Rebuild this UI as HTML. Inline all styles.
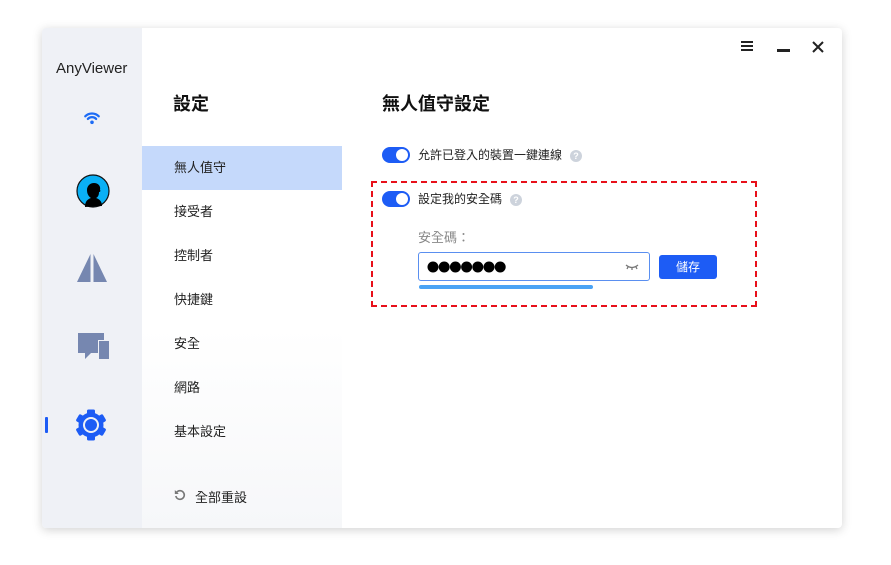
<!DOCTYPE html>
<html><head><meta charset="utf-8"><style>
*{margin:0;padding:0;box-sizing:border-box}
body{width:891px;height:565px;background:#fff;font-family:"Liberation Sans","Noto Sans CJK TC",sans-serif;position:relative;overflow:hidden}
.win{position:absolute;left:42px;top:28px;width:800px;height:500px;background:#fff;border-radius:4px;box-shadow:0 2px 10px rgba(0,0,0,.18);overflow:hidden}
.side{position:absolute;left:0;top:0;width:100px;height:500px;background:#eff1f6}
.mid{position:absolute;left:100px;top:0;width:200px;height:500px;background:linear-gradient(#fff 60%,#f6f7f9)}
.abs{position:absolute}
.nav{position:absolute;left:0;width:200px;height:44px;line-height:44px;padding-left:32px;font-size:13px;color:#222}
.tog{position:absolute;width:28px;height:16px;border-radius:8px;background:#1d5cf5}
.tog:after{content:"";position:absolute;right:2px;top:2px;width:12px;height:12px;border-radius:50%;background:#fff}
.q{position:absolute;width:12px;height:12px;border-radius:50%;background:#cdd3dc;color:#fff;font-size:9px;line-height:12px;text-align:center;font-weight:bold}
</style></head><body>
<div class="win">
<div class="side">
 <div class="abs" style="left:14px;top:32px;font-size:15px;color:#222">AnyViewer</div>
 <svg class="abs" style="left:41px;top:82px" width="18" height="16" viewBox="0 0 16 14"><path d="M2 5.5a8.5 8.5 0 0 1 12 0M4.3 7.8a5.2 5.2 0 0 1 7.4 0" stroke="#1d6cf5" stroke-width="2" fill="none" stroke-linecap="round"/><circle cx="8" cy="10.8" r="1.6" fill="#1d6cf5"/></svg>
 <svg class="abs" style="left:34px;top:146px" width="34" height="34" viewBox="0 0 34 34"><circle cx="17" cy="17" r="16" fill="#0ab0f5" stroke="#111" stroke-width="1.2"/><path d="M9 33c0-6 3-8 6-9-3-2-4-5-4-8 0-4 3-7 7-7s7 3 6 7c1 1 0 2-1 2 0 3-1 5-3 6 3 1 6 3 6 8z" fill="#000"/></svg>
 <svg class="abs" style="left:34px;top:226px" width="32" height="28" viewBox="0 0 32 28"><path d="M14.5 0L1 28h13.5z M17.5 0L31 28H17.5z" fill="#7687b0"/></svg>
 <svg class="abs" style="left:36px;top:305px" width="32" height="28" viewBox="0 0 32 28"><path d="M0 0h26v7h-6v13H13l-6 6v-6H0z" fill="#7687b0"/><rect x="21" y="8" width="10" height="18" fill="#7687b0"/></svg>
 <div class="abs" style="left:3px;top:389px;width:3px;height:16px;background:#1d5cf5;border-radius:1px"></div>
 <svg class="abs" style="left:33px;top:381px" width="32" height="32" viewBox="0 0 32 32"><g fill="#1d5cf5"><circle cx="16" cy="16" r="12.5"/><g id="t"><rect x="12" y="0.5" width="8" height="7" rx="1.5"/></g><use href="#t" transform="rotate(60 16 16)"/><use href="#t" transform="rotate(120 16 16)"/><use href="#t" transform="rotate(180 16 16)"/><use href="#t" transform="rotate(240 16 16)"/><use href="#t" transform="rotate(300 16 16)"/></g><circle cx="16" cy="16" r="8" fill="#eff1f6"/><circle cx="16" cy="16" r="6" fill="#1d5cf5"/></svg>
</div>
<div class="mid">
 <div class="abs" style="left:31px;top:62px;font-size:18px;font-weight:bold;color:#111">設定</div>
 <div class="nav" style="top:118px;background:#c5d9fb">無人值守</div>
 <div class="nav" style="top:162px">接受者</div>
 <div class="nav" style="top:206px">控制者</div>
 <div class="nav" style="top:250px">快捷鍵</div>
 <div class="nav" style="top:294px">安全</div>
 <div class="nav" style="top:338px">網路</div>
 <div class="nav" style="top:382px">基本設定</div>
 <svg class="abs" style="left:32px;top:461px" width="12" height="12" viewBox="0 0 12 12"><path d="M2.5 3.5A4.3 4.3 0 1 1 1.8 7" stroke="#777" stroke-width="1.6" fill="none"/><path d="M0.8 1v4h4z" fill="#777"/></svg>
 <div class="abs" style="left:53px;top:459px;font-size:13px;color:#222">全部重設</div>
</div>
<div class="abs" style="left:699px;top:13px;width:12px;height:10px;border-top:2.5px solid #222;border-bottom:2.5px solid #222"><div style="margin-top:1.5px;height:2.5px;background:#222"></div></div>
<div class="abs" style="left:735px;top:21px;width:13px;height:2.5px;background:#222"></div>
<svg class="abs" style="left:770px;top:13px" width="12" height="12" viewBox="0 0 12 12"><path d="M1 1L11 11M11 1L1 11" stroke="#222" stroke-width="2"/></svg>
<div class="abs" style="left:340px;top:62px;font-size:18px;font-weight:bold;color:#111">無人值守設定</div>
<div class="tog" style="left:340px;top:119px"></div>
<div class="abs" style="left:376px;top:119px;font-size:12px;color:#222;line-height:16px">允許已登入的裝置一鍵連線</div>
<div class="q" style="left:528px;top:122px">?</div>
<div class="abs" style="left:329px;top:153px;width:386px;height:126px;border:2px dashed #e8101a"></div>
<div class="tog" style="left:340px;top:163px"></div>
<div class="abs" style="left:376px;top:163px;font-size:12px;color:#222;line-height:16px">設定我的安全碼</div>
<div class="q" style="left:468px;top:166px">?</div>
<div class="abs" style="left:376px;top:199px;font-size:13px;color:#888">安全碼：</div>
<div class="abs" style="left:376px;top:224px;width:232px;height:29px;border:1px solid #5a8ff0;border-radius:3px;background:#fff"></div>
<svg class="abs" style="left:385px;top:233px" width="80" height="12" viewBox="0 0 80 12"><g fill="#000"><circle cx="6" cy="6" r="5.5"/><circle cx="17.2" cy="6" r="5.5"/><circle cx="28.4" cy="6" r="5.5"/><circle cx="39.6" cy="6" r="5.5"/><circle cx="50.8" cy="6" r="5.5"/><circle cx="62" cy="6" r="5.5"/><circle cx="73.2" cy="6" r="5.5"/></g></svg>
<svg class="abs" style="left:583px;top:235px" width="14" height="8" viewBox="0 0 14 8"><path d="M1 2q6 5 12 0M3 4l-1 2M7 5v2M11 4l1 2" stroke="#777" stroke-width="1.3" fill="none"/></svg>
<div class="abs" style="left:617px;top:227px;width:58px;height:24px;background:#1d5cf5;border-radius:3px;color:#fff;font-size:12px;text-align:center;line-height:24px">儲存</div>
<div class="abs" style="left:377px;top:257px;width:174px;height:4px;border-radius:2px;background:#4aa3f5"></div>
</div>
</body></html>
